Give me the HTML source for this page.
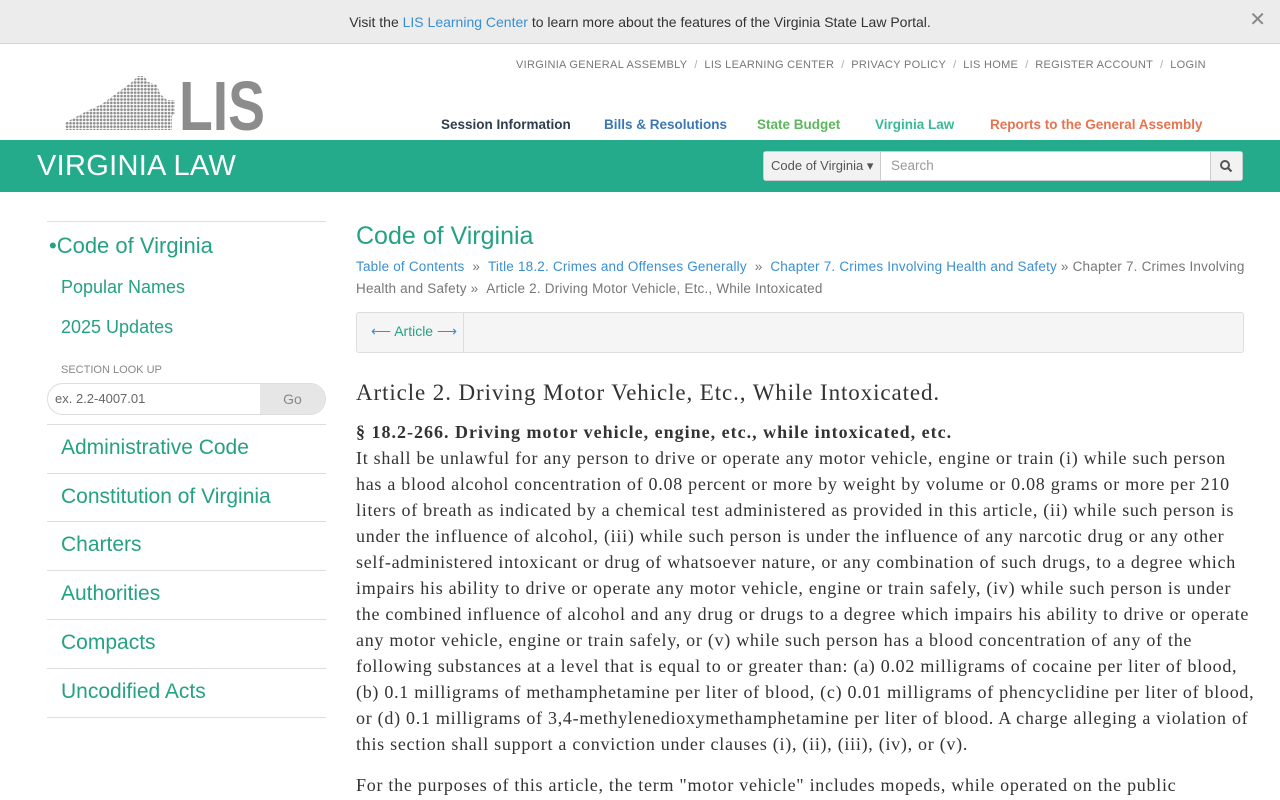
<!DOCTYPE html>
<html><head><meta charset="utf-8"><style>
*{box-sizing:border-box;margin:0;padding:0}
body{width:1280px;height:800px;overflow:hidden;background:#fff;font-family:"Liberation Sans",sans-serif;color:#333;position:relative}
.abs{position:absolute;white-space:nowrap}
.banner{position:absolute;left:0;top:0;width:1280px;height:44px;background:#ececec;border-bottom:1px solid #d6d6d6;font-size:14px;text-align:center;line-height:44px;color:#333}
.banner a{color:#3a8fd0;text-decoration:none}
.top a{font-size:11px;color:#777;text-decoration:none;letter-spacing:.3px}
.top span{color:#aaa;font-size:11px;margin:0 7px}
.nav{font-size:13.5px;font-weight:bold}
.bar{position:absolute;left:0;top:140px;width:1280px;height:52px;background:#24ab8c}
.side a{color:#25a184;text-decoration:none}
.hr{position:absolute;left:47px;width:279px;height:1px;background:#ddd}
.body{font-family:"Liberation Serif",serif;font-size:18px;line-height:26px;color:#333;letter-spacing:.72px}
</style></head><body>
<div class="banner">Visit the <a>LIS Learning Center</a> to learn more about the features of the Virginia State Law Portal.</div>
<div class="abs" style="right:14px;top:7px;font-size:20px;color:#888">✕</div>

<div class="abs top" style="left:516px;top:55px"><a>VIRGINIA GENERAL ASSEMBLY</a><span>/</span><a>LIS LEARNING CENTER</a><span>/</span><a>PRIVACY POLICY</a><span>/</span><a>LIS HOME</a><span>/</span><a>REGISTER ACCOUNT</a><span>/</span><a>LOGIN</a></div>

<svg class="abs" style="left:62px;top:74px" width="205" height="58">
<defs><pattern id="d" width="3.4" height="3.4" patternUnits="userSpaceOnUse"><circle cx="1.7" cy="1.7" r="1.35" fill="#8e8e8e"/></pattern></defs>
<polygon fill="url(#d)" points="3,56 3,49 21,39 40,30 55,19 70,8 76,2 82,2 86,8 95,11 98,20 105,26 113,26 113,40 110,42 110,56"/>
<text x="117" y="56" font-family="Liberation Sans" font-weight="bold" font-size="70" fill="#8c8c8c" textLength="86" lengthAdjust="spacingAndGlyphs">LIS</text>
</svg>

<div class="abs nav" style="left:441px;top:117px;color:#2e3e4e">Session Information</div>
<div class="abs nav" style="left:604px;top:117px;color:#3b77b5">Bills &amp; Resolutions</div>
<div class="abs nav" style="left:757px;top:117px;color:#5cb85c">State Budget</div>
<div class="abs nav" style="left:875px;top:117px;color:#3ab89a">Virginia Law</div>
<div class="abs nav" style="left:990px;top:117px;color:#e8734f">Reports to the General Assembly</div>

<div class="bar"></div>
<div class="abs" style="left:37px;top:150px;font-size:29px;color:#fff;letter-spacing:.3px">VIRGINIA LAW</div>
<div class="abs" style="left:763px;top:151px;width:480px;height:30px;background:#fff;border:1px solid #ccc;border-radius:3px"></div>
<div class="abs" style="left:764px;top:152px;width:117px;height:28px;background:#f2f2f2;border-right:1px solid #ccc;font-size:13px;line-height:28px;padding-left:7px;color:#555">Code of Virginia ▾</div>
<div class="abs" style="left:891px;top:152px;font-size:13.5px;line-height:28px;color:#999">Search</div>
<div class="abs" style="left:1210px;top:152px;width:32px;height:28px;background:#f2f2f2;border-left:1px solid #ccc"></div>
<svg class="abs" style="left:1219px;top:159px" width="14" height="14"><circle cx="6" cy="6" r="4" stroke="#555" stroke-width="2" fill="none"/><line x1="9" y1="9" x2="12.5" y2="12.5" stroke="#555" stroke-width="2.2"/></svg>

<div class="hr" style="top:221px"></div>
<div class="abs side" style="left:49px;top:233px;font-size:22px"><a>•Code of Virginia</a></div>
<div class="abs side" style="left:61px;top:277px;font-size:18px"><a>Popular Names</a></div>
<div class="abs side" style="left:61px;top:317px;font-size:18px"><a>2025 Updates</a></div>
<div class="abs" style="left:61px;top:364px;font-size:11px;color:#888">SECTION LOOK UP</div>
<div class="abs" style="left:47px;top:383px;width:279px;height:32px;border:1px solid #ddd;border-radius:16px;overflow:hidden">
<div style="position:absolute;right:0;top:0;width:65px;height:32px;background:#e6e6e6;text-align:center;line-height:31px;color:#888;font-size:14px">Go</div>
<div style="position:absolute;left:7px;top:7px;font-size:13px;color:#666">ex. 2.2-4007.01</div></div>
<div class="hr" style="top:424px"></div>
<div class="abs side" style="left:61px;top:436px;font-size:21px"><a>Administrative Code</a></div>
<div class="hr" style="top:473px"></div>
<div class="abs side" style="left:61px;top:485px;font-size:21px"><a>Constitution of Virginia</a></div>
<div class="hr" style="top:521px"></div>
<div class="abs side" style="left:61px;top:533px;font-size:21px"><a>Charters</a></div>
<div class="hr" style="top:570px"></div>
<div class="abs side" style="left:61px;top:582px;font-size:21px"><a>Authorities</a></div>
<div class="hr" style="top:619px"></div>
<div class="abs side" style="left:61px;top:631px;font-size:21px"><a>Compacts</a></div>
<div class="hr" style="top:668px"></div>
<div class="abs side" style="left:61px;top:680px;font-size:21px"><a>Uncodified Acts</a></div>
<div class="hr" style="top:717px"></div>

<div class="abs" style="left:356px;top:222px;font-size:25px;color:#25a184">Code of Virginia</div>
<div class="abs" style="left:356px;top:256px;font-size:13.5px;color:#777;line-height:22px;letter-spacing:.2px"><span style="color:#3a8fd0">Table of Contents</span> &nbsp;» &nbsp;<span style="color:#3a8fd0">Title 18.2. Crimes and Offenses Generally</span> &nbsp;» &nbsp;<span style="color:#3a8fd0">Chapter 7. Crimes Involving Health and Safety</span> » Chapter 7. Crimes Involving<br>Health and Safety » &nbsp;Article 2. Driving Motor Vehicle, Etc., While Intoxicated</div>
<div class="abs" style="left:356px;top:312px;width:888px;height:41px;background:#f5f5f5;border:1px solid #ddd;border-radius:3px"></div>
<div class="abs" style="left:463px;top:313px;width:1px;height:39px;background:#ddd"></div>
<div class="abs" style="left:371px;top:323px;font-size:14px;color:#25a184"><span style="color:#3a8fd0">⟵</span> Article <span style="color:#3a8fd0">⟶</span></div>

<div class="abs" style="left:356px;top:380px;font-family:'Liberation Serif',serif;font-size:23px;color:#333;letter-spacing:.9px">Article 2. Driving Motor Vehicle, Etc., While Intoxicated.</div>
<div class="abs body" style="left:356px;top:419px;font-weight:bold;letter-spacing:1px">§ 18.2-266. Driving motor vehicle, engine, etc., while intoxicated, etc.</div>
<div class="abs body" style="left:356px;top:445px">It shall be unlawful for any person to drive or operate any motor vehicle, engine or train (i) while such person<br>has a blood alcohol concentration of 0.08 percent or more by weight by volume or 0.08 grams or more per 210<br>liters of breath as indicated by a chemical test administered as provided in this article, (ii) while such person is<br>under the influence of alcohol, (iii) while such person is under the influence of any narcotic drug or any other<br>self-administered intoxicant or drug of whatsoever nature, or any combination of such drugs, to a degree which<br>impairs his ability to drive or operate any motor vehicle, engine or train safely, (iv) while such person is under<br>the combined influence of alcohol and any drug or drugs to a degree which impairs his ability to drive or operate<br>any motor vehicle, engine or train safely, or (v) while such person has a blood concentration of any of the<br>following substances at a level that is equal to or greater than: (a) 0.02 milligrams of cocaine per liter of blood,<br>(b) 0.1 milligrams of methamphetamine per liter of blood, (c) 0.01 milligrams of phencyclidine per liter of blood,<br>or (d) 0.1 milligrams of 3,4-methylenedioxymethamphetamine per liter of blood. A charge alleging a violation of<br>this section shall support a conviction under clauses (i), (ii), (iii), (iv), or (v).</div>
<div class="abs body" style="left:356px;top:772px">For the purposes of this article, the term "motor vehicle" includes mopeds, while operated on the public</div>
</body></html>
